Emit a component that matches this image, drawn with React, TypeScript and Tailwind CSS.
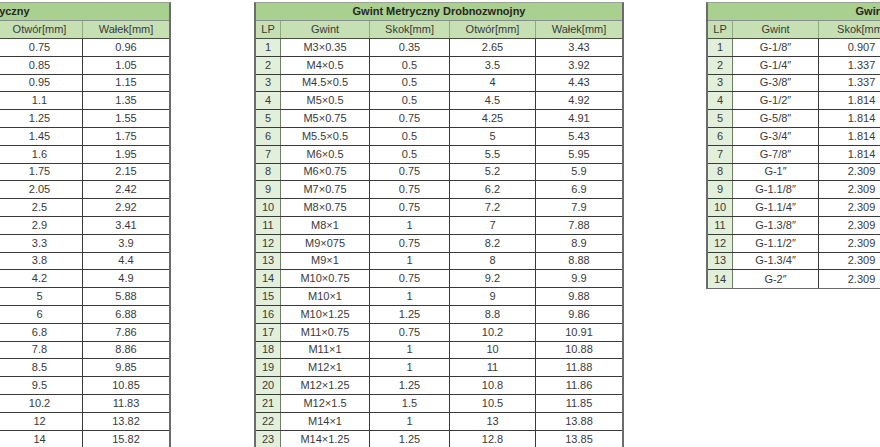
import React from 'react';

type Row = string[];

interface ThreadTableProps {
  title: string;
  cols: string[]; // width classes, written out in full
  head: string[];
  rows: Row[];
}

const HEAD = ['LP', 'Gwint', 'Skok[mm]', 'Otwór[mm]', 'Wałek[mm]'];

const METRIC: Row[] = [
  ['1', 'M1×0.25', '0.25', '0.75', '0.96'],
  ['2', 'M1.1×0.25', '0.25', '0.85', '1.05'],
  ['3', 'M1.2×0.25', '0.25', '0.95', '1.15'],
  ['4', 'M1.4×0.3', '0.3', '1.1', '1.35'],
  ['5', 'M1.6×0.35', '0.35', '1.25', '1.55'],
  ['6', 'M1.8×0.35', '0.35', '1.45', '1.75'],
  ['7', 'M2×0.4', '0.4', '1.6', '1.95'],
  ['8', 'M2.2×0.45', '0.45', '1.75', '2.15'],
  ['9', 'M2.5×0.45', '0.45', '2.05', '2.42'],
  ['10', 'M3×0.5', '0.5', '2.5', '2.92'],
  ['11', 'M3.5×0.6', '0.6', '2.9', '3.41'],
  ['12', 'M4×0.7', '0.7', '3.3', '3.9'],
  ['13', 'M4.5×0.75', '0.75', '3.8', '4.4'],
  ['14', 'M5×0.8', '0.8', '4.2', '4.9'],
  ['15', 'M6×1', '1', '5', '5.88'],
  ['16', 'M7×1', '1', '6', '6.88'],
  ['17', 'M8×1.25', '1.25', '6.8', '7.86'],
  ['18', 'M9×1.25', '1.25', '7.8', '8.86'],
  ['19', 'M10×1.5', '1.5', '8.5', '9.85'],
  ['20', 'M11×1.5', '1.5', '9.5', '10.85'],
  ['21', 'M12×1.75', '1.75', '10.2', '11.83'],
  ['22', 'M14×2', '2', '12', '13.82'],
  ['23', 'M16×2', '2', '14', '15.82'],
];

const FINE: Row[] = [
  ['1', 'M3×0.35', '0.35', '2.65', '3.43'],
  ['2', 'M4×0.5', '0.5', '3.5', '3.92'],
  ['3', 'M4.5×0.5', '0.5', '4', '4.43'],
  ['4', 'M5×0.5', '0.5', '4.5', '4.92'],
  ['5', 'M5×0.75', '0.75', '4.25', '4.91'],
  ['6', 'M5.5×0.5', '0.5', '5', '5.43'],
  ['7', 'M6×0.5', '0.5', '5.5', '5.95'],
  ['8', 'M6×0.75', '0.75', '5.2', '5.9'],
  ['9', 'M7×0.75', '0.75', '6.2', '6.9'],
  ['10', 'M8×0.75', '0.75', '7.2', '7.9'],
  ['11', 'M8×1', '1', '7', '7.88'],
  ['12', 'M9×075', '0.75', '8.2', '8.9'],
  ['13', 'M9×1', '1', '8', '8.88'],
  ['14', 'M10×0.75', '0.75', '9.2', '9.9'],
  ['15', 'M10×1', '1', '9', '9.88'],
  ['16', 'M10×1.25', '1.25', '8.8', '9.86'],
  ['17', 'M11×0.75', '0.75', '10.2', '10.91'],
  ['18', 'M11×1', '1', '10', '10.88'],
  ['19', 'M12×1', '1', '11', '11.88'],
  ['20', 'M12×1.25', '1.25', '10.8', '11.86'],
  ['21', 'M12×1.5', '1.5', '10.5', '11.85'],
  ['22', 'M14×1', '1', '13', '13.88'],
  ['23', 'M14×1.25', '1.25', '12.8', '13.85'],
];

const PIPE: Row[] = [
  ['1', 'G-1/8″', '0.907', '8.57', '9.73'],
  ['2', 'G-1/4″', '1.337', '11.45', '13.16'],
  ['3', 'G-3/8″', '1.337', '14.95', '16.66'],
  ['4', 'G-1/2″', '1.814', '18.63', '20.96'],
  ['5', 'G-5/8″', '1.814', '20.59', '22.91'],
  ['6', 'G-3/4″', '1.814', '24.12', '26.44'],
  ['7', 'G-7/8″', '1.814', '27.88', '30.20'],
  ['8', 'G-1″', '2.309', '30.29', '33.25'],
  ['9', 'G-1.1/8″', '2.309', '34.94', '37.90'],
  ['10', 'G-1.1/4″', '2.309', '38.95', '41.91'],
  ['11', 'G-1.3/8″', '2.309', '41.37', '44.32'],
  ['12', 'G-1.1/2″', '2.309', '44.85', '47.80'],
  ['13', 'G-1.3/4″', '2.309', '50.79', '53.75'],
  ['14', 'G-2″', '2.309', '56.66', '59.61'],
];

function ThreadTable({ title, cols, head, rows }: ThreadTableProps) {
  return (
    <div className="shrink-0 self-start border-x-2 border-x-[#6b6b6b] border-t border-t-[#a0a0a0] border-b border-b-[#6b6b6b]">
      {/* title */}
      <div className="h-[18px] flex items-center justify-center bg-[#a9d08e] border-b border-[#8c8c8c] font-bold text-[#262626]">
        {title}
      </div>
      {/* column headers */}
      <div className="h-[18px] flex bg-[#c6e0b4] border-b border-[#4a4a4a]">
        {head.map((h, i) => (
          <div
            key={h}
            className={`${cols[i]} shrink-0 flex items-center justify-center ${i < head.length - 1 ? 'border-r border-[#8fa982]' : ''}`}
          >
            {h}
          </div>
        ))}
      </div>
      {/* data */}
      {rows.map((r, ri) => (
        <div key={ri} className={`h-[17.8px] flex ${ri < rows.length - 1 ? 'border-b border-[#3a3a3a]' : ''}`}>
          {r.map((c, i) => (
            <div
              key={i}
              className={`${cols[i]} shrink-0 flex items-center justify-center ${i === 0 ? 'bg-[#e2efda] border-r border-[#6f7f66]' : ''} ${i > 0 && i < r.length - 1 ? 'border-r border-[#3a3a3a]' : ''}`}
            >
              {c}
            </div>
          ))}
        </div>
      ))}
    </div>
  );
}

const METRIC_COLS = ['w-[25px]', 'w-[89px]', 'w-[80px]', 'w-[86px]', 'w-[86px]'];
const PIPE_COLS = ['w-[25px]', 'w-[86px]', 'w-[86px]', 'w-[86px]', 'w-[86px]'];

export default function App() {
  return (
    <div
      className="w-[880px] h-[447px] overflow-hidden bg-white flex pt-[2px] text-[11px] leading-none text-[#3a3a3a]"
      style={{ fontFamily: '"Liberation Sans", Arial, sans-serif' }}
    >
      <div className="ml-[-199px]">
        <ThreadTable title="Gwint Metryczny" cols={METRIC_COLS} head={HEAD} rows={METRIC} />
      </div>
      <div className="ml-[83px]">
        <ThreadTable title="Gwint Metryczny Drobnozwnojny" cols={METRIC_COLS} head={HEAD} rows={FINE} />
      </div>
      <div className="ml-[82px]">
        <ThreadTable title="Gwint Rurowy" cols={PIPE_COLS} head={HEAD} rows={PIPE} />
      </div>
    </div>
  );
}
